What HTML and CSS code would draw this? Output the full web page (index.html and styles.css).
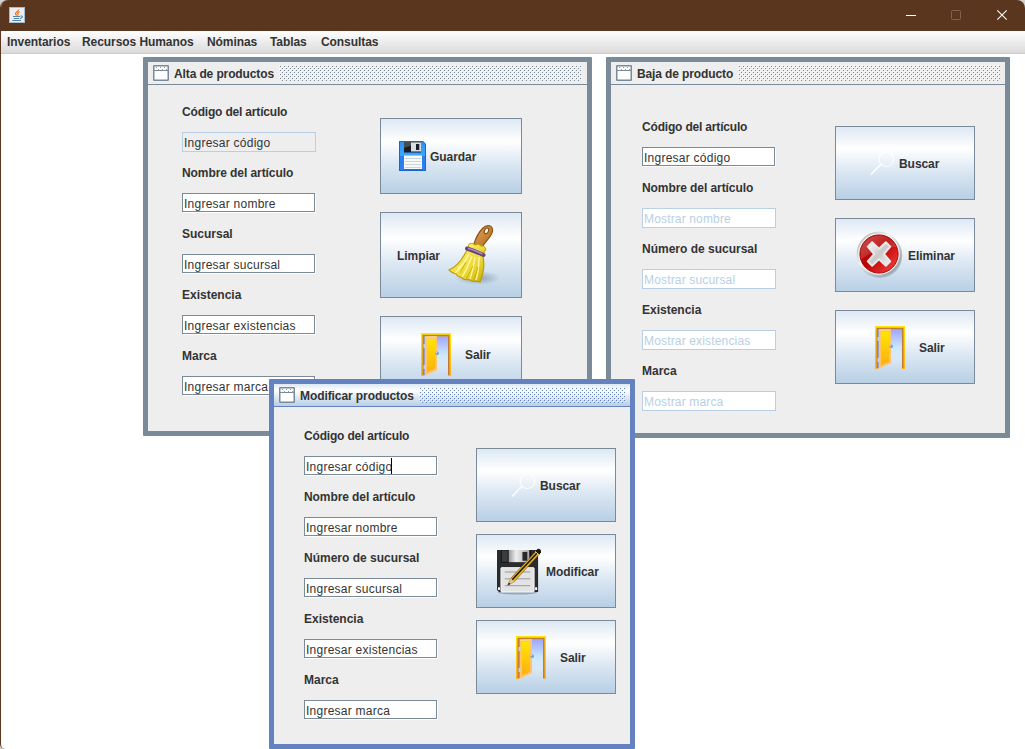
FILE: index.html
```html
<!DOCTYPE html>
<html lang="es">
<head>
<meta charset="utf-8">
<title>Inventarios</title>
<link rel="stylesheet" href="styles.css">
</head>
<body>
<svg class="defs" aria-hidden="true">
  <defs>
    <linearGradient id="sky" x1="0" y1="0" x2="0" y2="1"><stop offset="0" stop-color="#a0a4fb"/><stop offset=".45" stop-color="#c7e6fb"/><stop offset="1" stop-color="#e4eef6" stop-opacity="0"/></linearGradient>
    <linearGradient id="leaf" x1="0" y1="0" x2="0" y2="1"><stop offset="0" stop-color="#ffe600"/><stop offset="1" stop-color="#ffae10"/></linearGradient>
    <linearGradient id="jamb" x1="0" y1="0" x2="0" y2="1"><stop offset="0" stop-color="#ffe600"/><stop offset="1" stop-color="#ffb020"/></linearGradient>
    <linearGradient id="red" x1="0" y1="0" x2="1" y2="1"><stop offset="0" stop-color="#c43a3a"/><stop offset=".45" stop-color="#b80000"/><stop offset="1" stop-color="#ff4848"/></linearGradient>
    <linearGradient id="silver" x1="0" y1="0" x2="1" y2="1"><stop offset="0" stop-color="#fff"/><stop offset=".5" stop-color="#c9c9c9"/><stop offset="1" stop-color="#f4f4f4"/></linearGradient>
    <linearGradient id="ring" x1="0" y1="0" x2="1" y2="1"><stop offset="0" stop-color="#aaa"/><stop offset=".4" stop-color="#f2f2f2"/><stop offset="1" stop-color="#888"/></linearGradient>
    <linearGradient id="blue" x1="0" y1="0" x2="0" y2="1"><stop offset="0" stop-color="#2d8df0"/><stop offset=".45" stop-color="#3ca5ff"/><stop offset="1" stop-color="#0f6ee8"/></linearGradient>
    <linearGradient id="wood" x1="0" y1="0" x2="1" y2="1"><stop offset="0" stop-color="#e0a560"/><stop offset="1" stop-color="#b06a18"/></linearGradient>
    <linearGradient id="straw" x1="0" y1="0" x2="1" y2="1"><stop offset="0" stop-color="#fff27a"/><stop offset=".6" stop-color="#ecd83a"/><stop offset="1" stop-color="#c9ab00"/></linearGradient>
    <radialGradient id="shade"><stop offset="0" stop-color="#506880" stop-opacity=".5"/><stop offset="1" stop-color="#506880" stop-opacity="0"/></radialGradient>
    <linearGradient id="metal" x1="0" y1="0" x2="1" y2="0"><stop offset="0" stop-color="#999"/><stop offset=".35" stop-color="#eee"/><stop offset="1" stop-color="#aaa"/></linearGradient>
  </defs>
  <symbol id="door" viewBox="0 0 30 44">
    <rect x="3" y="3" width="24" height="39" fill="url(#sky)"/>
    <path d="M0 43V0H30V43H27V3H3.500V43Z" fill="url(#jamb)"/>
    <path d="M1.500 42V1.800H28.500V42H27V3.200H3.500V42Z" fill="#c27b34"/>
    <path d="M3.500 3.500H27" stroke="#b6a29b"/>
    <path d="M3.500 42V4" stroke="#98a1c5" stroke-width="1.200"/>
    <path d="M4 3.500H16V37L4 42.500Z" fill="#ffc36d"/>
    <path d="M4.200 4.200L15.500 3.800" stroke="#ffe48e"/>
    <path d="M6 6H14V35.500L6 39.500Z" fill="url(#leaf)"/>
    <path d="M3.500 11V15M3.500 32V36" stroke="#bcd4e5" stroke-width="2"/>
    <circle cx="16.200" cy="20.300" r="1.800" fill="#7d9bc8"/><circle cx="15.600" cy="19.700" r=".6" fill="#d8e5fa"/>
  </symbol>
  <symbol id="lens" viewBox="0 0 26 26">
    <circle cx="17" cy="8.500" r="7.600" fill="none" stroke="#fff" stroke-width="1.200" opacity=".85"/>
    <path d="M11.500 13.500L1 24.500" stroke="#fff" stroke-width="1.500"/>
  </symbol>
  <symbol id="frame-icon" viewBox="0 0 16 16">
    <rect x=".75" y=".75" width="14.500" height="14.500" rx=".5" fill="#fff" stroke="#7a8a99" stroke-width="1.500"/>
    <path d="M1 5.500H15" stroke="#7a8a99"/>
    <path d="M3 2.500H14M5 4.500H14" stroke="#5c7fc4" stroke-width="1" stroke-dasharray="1 3" opacity=".8"/>
  </symbol>
</svg>

<div class="app">
  <header class="titlebar">
    <svg class="java" viewBox="0 0 16 16">
      <rect x=".5" y=".5" width="15" height="15" fill="#e9eef2" stroke="#a9bac8"/>
      <path d="M9.700 2.500C10 4.500 5.800 5 6.500 7C6.700 7.700 7.500 8 7.700 8.600M10.800 4.700C8.300 5.600 8.400 6.600 9 7.300C9.200 7.800 8.800 8.300 8.600 8.600" fill="none" stroke="#ec7417" stroke-width="1.200"/>
      <path d="M4 9.500H11M4.800 11.500H10.200M3.300 13.500H12M11.500 9C14.500 8.500 13.500 11 11 11.500" fill="none" stroke="#5383a1" stroke-width="1.100"/>
    </svg>
    <svg class="controls" viewBox="0 0 104 12">
      <path d="M0 6.500H10" stroke="#fff"/>
      <rect x="45.500" y="1.500" width="9" height="9" rx="1" fill="none" stroke="#7d6250"/>
      <path d="M91.300 1.300L100.700 10.700M100.700 1.300L91.300 10.700" stroke="#fff" stroke-width="1.100"/>
    </svg>
  </header>
  <nav class="menubar">
    <span>Inventarios</span><span>Recursos Humanos</span><span>Nóminas</span><span>Tablas</span><span>Consultas</span>
  </nav>
  <main class="desktop">

    <section class="frame frame-alta">
      <div class="caption"><svg class="caption-icon"><use href="#frame-icon"/></svg><span class="name">Alta de productos</span><i class="bumps"></i></div>
      <div class="content">
        <div class="form">
          <div class="row"><div class="label">Código del artículo</div><div class="field readonly">Ingresar código</div></div>
          <div class="row"><div class="label">Nombre del artículo</div><div class="field">Ingresar nombre</div></div>
          <div class="row"><div class="label">Sucursal</div><div class="field">Ingresar sucursal</div></div>
          <div class="row"><div class="label">Existencia</div><div class="field">Ingresar existencias</div></div>
          <div class="row"><div class="label">Marca</div><div class="field">Ingresar marca</div></div>
        </div>
        <div class="actions">
          <div class="button save">
            <svg class="icon" viewBox="0 0 27 30">
              <path d="M0 0H24L27 3V30H0Z" fill="url(#blue)"/>
              <path d="M.5 29.500V.5H23.800L26.500 3.200V29.500Z" fill="none" stroke="#1767d2"/>
              <path d="M1 15H5V29H1ZM23 15H26V29H23Z" fill="#2b7ff0"/>
              <path d="M5 1H22V11.500H5Z" fill="#171d24"/><path d="M5 1H22L5 7Z" fill="#454d55"/>
              <rect x="12" y="1.500" width="10" height="9" fill="#dadde2"/><rect x="17" y="3" width="3.300" height="6" fill="#17202b"/>
              <rect x="5" y="14.500" width="18" height="13.500" fill="#f8f8f5"/>
              <path d="M6 17.500H22M6 20.500H22M6 23.500H22M6 26.500H22" stroke="#c9d5df"/>
            </svg><span>Guardar</span>
          </div>
          <div class="button clean">
            <span>Limpiar</span><svg class="icon" viewBox="0 0 54 62">
              <ellipse cx="30" cy="54" rx="23" ry="7" fill="url(#shade)"/>
              <path d="M26 20C28 13 31 8 35 4C39 0 45 1 44.500 7C44 12 38 17 34 23Z" fill="url(#wood)" stroke="#8d5012" stroke-width="1.200"/>
              <ellipse cx="38.500" cy="6.800" rx="2" ry="3" transform="rotate(28 38.500 6.800)" fill="#f2f7fb" stroke="#8d5012" stroke-width="1.200"/>
              <path d="M21 20Q24 18 27 21Q31 19 33 22Q36 21 38 25L34 33L19 27Z" fill="url(#straw)" stroke="#c5a600"/>
              <path d="M19 26C14 36 9 43 1 46C5 50 7 49 8 50C10 54 13 52 14 54C17 57 20 55 22 56C26 59 29 56 32 58C35 50 37 43 35 32Z" fill="url(#straw)" stroke="#bca000" stroke-width="1.200"/>
              <path d="M21 30Q15 42 7 49M24 32Q19 45 14 53M27 33Q25 46 22 55M31 33Q31 46 28 56M18 36Q13 43 10 44" fill="none" stroke="#fff79b" stroke-width="1.400"/>
              <path d="M18 38L12 49M25 42L18 55M30 43L26 56" stroke="#c7ac00" stroke-width=".8"/>
              <path d="M19 24.500Q27 27 35.500 31" stroke="#694081" stroke-width="4" stroke-linecap="round" fill="none"/>
              <path d="M20 24.200Q27 26 34.500 30" stroke="#a78ac0" stroke-width="1.500" fill="none"/>
            </svg>
          </div>
          <div class="button exit"><svg class="icon"><use href="#door"/></svg><span>Salir</span></div>
        </div>
      </div>
    </section>

    <section class="frame frame-baja">
      <div class="caption"><svg class="caption-icon"><use href="#frame-icon"/></svg><span class="name">Baja de producto</span><i class="bumps"></i></div>
      <div class="content">
        <div class="form">
          <div class="row"><div class="label">Código del artículo</div><div class="field">Ingresar código</div></div>
          <div class="row"><div class="label">Nombre del artículo</div><div class="field disabled">Mostrar nombre</div></div>
          <div class="row"><div class="label">Número de sucursal</div><div class="field disabled">Mostrar sucursal</div></div>
          <div class="row"><div class="label">Existencia</div><div class="field disabled">Mostrar existencias</div></div>
          <div class="row"><div class="label">Marca</div><div class="field disabled">Mostrar marca</div></div>
        </div>
        <div class="actions">
          <div class="button search"><svg class="icon"><use href="#lens"/></svg><span>Buscar</span></div>
          <div class="button delete">
            <svg class="icon" viewBox="0 0 48 48">
              <circle cx="24.500" cy="25" r="22.800" fill="#718596" opacity=".45"/>
              <circle cx="23.500" cy="23.500" r="22" fill="#f4f4f4" stroke="url(#ring)" stroke-width="1.800"/>
              <circle cx="23.500" cy="23.500" r="19.500" fill="url(#red)" stroke="#a40b0b"/>
              <path d="M5 20A19 19 0 0 1 41 16Q23 16 5 29Z" fill="#fff" opacity=".13"/>
              <path d="M12 16L16.500 11.500L23.500 18L30.500 11.500L35 16L28.500 23.500L35 31L30.500 35.500L23.500 29L16.500 35.500L12 31L18.500 23.500Z" fill="url(#silver)" stroke="#e8e8e8" stroke-width="2" stroke-linejoin="round"/>
            </svg><span>Eliminar</span>
          </div>
          <div class="button exit"><svg class="icon"><use href="#door"/></svg><span>Salir</span></div>
        </div>
      </div>
    </section>

    <section class="frame frame-modificar active">
      <div class="caption"><svg class="caption-icon"><use href="#frame-icon"/></svg><span class="name">Modificar productos</span><i class="bumps"></i></div>
      <div class="content">
        <div class="form">
          <div class="row"><div class="label">Código del artículo</div><div class="field focused">Ingresar código</div></div>
          <div class="row"><div class="label">Nombre del artículo</div><div class="field">Ingresar nombre</div></div>
          <div class="row"><div class="label">Número de sucursal</div><div class="field">Ingresar sucursal</div></div>
          <div class="row"><div class="label">Existencia</div><div class="field">Ingresar existencias</div></div>
          <div class="row"><div class="label">Marca</div><div class="field">Ingresar marca</div></div>
        </div>
        <div class="actions">
          <div class="button search"><svg class="icon"><use href="#lens"/></svg><span>Buscar</span></div>
          <div class="button edit">
            <svg class="icon" viewBox="0 0 46 48">
              <ellipse cx="21" cy="45.500" rx="20" ry="2" fill="#5e7182" opacity=".5"/>
              <path d="M0 2H42V45H2L0 43Z" fill="#2b2b2b"/>
              <path d="M4 2H35V15H4Z" fill="#161616"/><rect x="5" y="2.500" width="6" height="11.500" fill="#3a3d40"/>
              <rect x="12" y="2" width="21" height="12.500" fill="url(#metal)"/><rect x="26" y="4" width="5" height="9" fill="#26292c"/>
              <rect x="4" y="20" width="34" height="25" rx="1" fill="#e3e3e3" stroke="#fff" stroke-width=".8"/>
              <path d="M8 24.500H34M8 31.500H34M8 38.500H34" stroke="#999"/>
              <path d="M1 40H3V43H1ZM39 40H41V43H39Z" fill="#fff"/>
              <path d="M11 38L14 31L40 3L43.500 6L17.500 34.500Z" fill="#edb126" stroke="#4e3b0b" stroke-width=".5"/>
              <path d="M15.500 32.500L41.500 4.500" stroke="#16130e" stroke-width="1.500"/>
              <path d="M11 38L14 31L17.500 34.500Z" fill="#e3c38c"/><path d="M11 38L12.200 35.200L13.800 36.700Z" fill="#111"/>
              <path d="M39.500 3.500L41.500 .8Q45.500 .5 45 4.500L43 6.500Z" fill="#171717"/><path d="M39 3.500L43 7" stroke="#f0d166"/>
            </svg><span>Modificar</span>
          </div>
          <div class="button exit"><svg class="icon"><use href="#door"/></svg><span>Salir</span></div>
        </div>
      </div>
    </section>
  </main>
</div>
</body>
</html>
```
FILE: styles.css
```css
* { box-sizing: border-box; }
body {
  margin: 0;
  background: #d4d0cc;
  font: bold 12px/16px "Liberation Sans", Arial, sans-serif;
  color: #333;
  overflow: hidden;
}
.defs { position: absolute; width: 0; height: 0; }
svg { display: block; flex: none; }
span { white-space: nowrap; }

.app {
  display: flex;
  flex-direction: column;
  width: 1025px;
  height: 749px;
  border-left: 1px solid #59361d;
  border-radius: 8px 8px 0 5px;
  background: #fff;
  overflow: hidden;
}
.titlebar {
  display: flex;
  justify-content: space-between;
  height: 31px;
  padding: 7px 15px 0 8px;
  background: #59361d;
}
.java { width: 16px; height: 16px; }
.controls { width: 104px; height: 12px; margin-top: 2px; }
.menubar {
  display: grid;
  grid-template-columns: 75px 125px 63px 51px 1fr;
  height: 23px;
  padding: 3px 6px 0;
  background: linear-gradient(#fff, #dadada);
  border-bottom: 1px solid #ccc;
  letter-spacing: -.07px;
}
.desktop { position: relative; flex: 1; }

/* internal windows */
.frame {
  --edge: #7a8a99;
  position: absolute;
  border: 5px solid var(--edge);
  border-radius: 1px;
  background: #eee;
}
.frame.active { --edge: #6382bf; }
.frame-alta { left: 142px; top: 3px; width: 449px; height: 379px; }
.frame-baja { left: 605px; top: 3px; width: 404px; height: 381px; }
.frame-modificar { left: 268px; top: 325px; width: 366px; height: 370px; }

.caption {
  display: flex;
  align-items: center;
  gap: 5px;
  height: 23px;
  padding: 0 5px;
  border-bottom: 1px solid var(--edge);
}
.active .caption {
  background: linear-gradient(#dde8f3, #fff 30%, #dde8f3 60%, #b8cfe5);
}
.caption-icon { width: 16px; height: 16px; }
.caption .name { padding-top: 2px; letter-spacing: -.12px; }
.frame-alta .name { width: 100px; }
.frame-baja .name { width: 96px; }
.frame-modificar .name { width: 114px; letter-spacing: -.08px; }
.bumps {
  flex: 1;
  height: 16px;
  background:
    radial-gradient(circle at 1.5px 1.5px, var(--edge) .6px, transparent .7px) 0 0 / 4px 4px,
    radial-gradient(circle at 3.5px 3.5px, var(--edge) .6px, transparent .7px) 0 0 / 4px 4px,
    radial-gradient(circle at .5px .5px, #fff .6px, transparent .7px) 0 0 / 4px 4px,
    radial-gradient(circle at 2.5px 2.5px, #fff .6px, transparent .7px) 0 0 / 4px 4px;
}

.content { display: flex; align-items: flex-start; }
.frame-alta .content { padding: 19px 0 0 34px; gap: 64px; }
.frame-baja .content { padding: 34px 0 0 31px; gap: 59px; }
.frame-modificar .content { padding: 21px 0 0 30px; gap: 38px; }

.form { display: grid; gap: 13px; width: 134px; }
.row { display: grid; align-content: start; gap: 12px; height: 48px; }
.label { height: 16px; white-space: nowrap; }
.row:nth-child(1) .label { letter-spacing: -.18px; }
.row:nth-child(2) .label { letter-spacing: -.08px; }
.field {
  width: 133px;
  height: 19px;
  padding: 2px 0 0 1px;
  border: 1px solid #7a8a99;
  box-shadow: 1px 1px #fff;
  background: #fff;
  font-weight: normal;
  letter-spacing: .25px;
  white-space: nowrap;
}
.field.readonly, .field.disabled {
  width: 134px;
  height: 20px;
  border-color: #b8cfe5;
  box-shadow: none;
}
.field.readonly { background: #eee; }
.field.disabled { color: #b8cfe5; letter-spacing: .16px; }
.field.focused::after {
  content: "";
  display: inline-block;
  width: 1px;
  height: 16px;
  margin: -1px 0 0 -1px;
  vertical-align: top;
  background: #000;
}

.actions { display: grid; gap: 18px; width: 140px; }
.frame-alta .actions { width: 142px; margin-top: 14px; height: 274px; }
.frame-baja .actions { margin-top: 7px; }
.frame-modificar .actions { margin-top: 20px; gap: 12px; }
.button {
  display: flex;
  align-items: center;
  height: 74px;
  border: 1px solid #7a8a99;
  background: linear-gradient(#dde8f3, #fff 30%, #dde8f3 60%, #b8cfe5);
}
.button span { padding-top: 2px; letter-spacing: -.06px; }
.frame-alta .button { height: 76px; }
.frame-alta .clean { height: 86px; padding-left: 16px; }
.save { padding-left: 18px; gap: 4px; }
.save .icon { width: 27px; height: 30px; }
.clean { gap: 8px; }
.clean .icon { width: 54px; height: 62px; }
.exit { padding-left: 39px; gap: 14px; }
.frame-alta .exit { padding-left: 40px; }
.exit .icon { width: 30px; height: 44px; margin-top: 1px; }
.search { padding-left: 34px; gap: 4px; }
.search .icon { width: 25px; height: 25px; }
.delete { padding-left: 20px; gap: 5px; }
.delete .icon { width: 47px; height: 47px; margin-top: -1px; }
.edit { padding-left: 20px; gap: 4px; }
.edit .icon { width: 45px; height: 47px; }
```
